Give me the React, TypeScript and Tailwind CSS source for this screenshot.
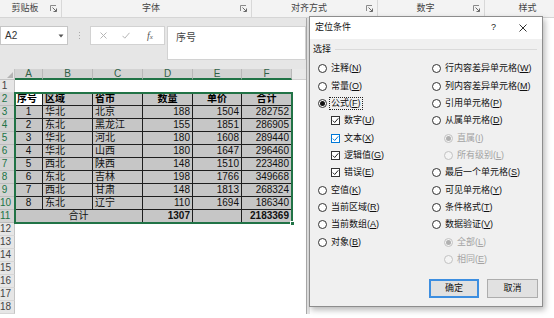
import React from "react";

const groups = [
  { label: "剪贴板", w: "w-[62px]", launcher: true },
  { label: "字体", w: "w-[190px]", launcher: true },
  { label: "对齐方式", w: "w-[126px]", launcher: true },
  { label: "数字", w: "w-[107px]", launcher: true },
  { label: "样式", w: "w-[90px]", launcher: false },
];

function Launcher() {
  return (
    <svg width="7" height="7" viewBox="0 0 7 7" className="shrink-0">
      <path d="M0.5 6V0.5H6" stroke="#8a8a8a" fill="none" strokeWidth="1" />
      <path d="M2.5 2.5L6.3 6.3M6.5 3.5V6.5H3.5" stroke="#6a6a6a" fill="none" strokeWidth="1" />
    </svg>
  );
}

function Ribbon() {
  return (
    <div className="flex h-[18px] overflow-hidden border-b border-[#d5d5d5] bg-[#f3f3f3]">
      {groups.map((g) => (
        <div
          key={g.label}
          className={`${g.w} flex shrink-0 items-center border-r border-[#d8d8d8] pr-[4px]`}
        >
          <span className="flex-1 text-center text-[9px] leading-none text-[#444]">{g.label}</span>
          {g.launcher && <Launcher />}
        </div>
      ))}
    </div>
  );
}

function FormulaBar() {
  return (
    <div className="flex h-[51px] items-start bg-[#e6e6e6] pt-[8px]">
      <div className="flex h-[19px] w-[68px] items-center justify-between border border-[#c6c6c6] bg-white pl-[4px] pr-[3px] text-[10px] text-[#333]">
        <span>A2</span>
        <svg width="6" height="4" viewBox="0 0 6 4">
          <path d="M0.5 0.5H5.5L3 3.5Z" fill="#555" />
        </svg>
      </div>
      <div className="flex h-[19px] w-[22px] flex-col items-center justify-center gap-[2px]">
        <span className="h-[1px] w-[1px] bg-[#aaa]" />
        <span className="h-[1px] w-[1px] bg-[#aaa]" />
        <span className="h-[1px] w-[1px] bg-[#aaa]" />
      </div>
      <div className="flex h-[19px] w-[75px] items-center border border-[#d2d2d2] bg-white pl-[9px]">
        <svg width="7" height="7" viewBox="0 0 7 7">
          <path d="M0.5 0.5L6.5 6.5M6.5 0.5L0.5 6.5" stroke="#b5b5b5" strokeWidth="1" />
        </svg>
        <svg width="8" height="7" viewBox="0 0 8 7" className="ml-[15px]">
          <path d="M0.5 3.8L2.8 6.2L7.5 0.8" stroke="#b5b5b5" strokeWidth="1" fill="none" />
        </svg>
        <span className="ml-[17px] font-['Liberation_Serif',serif] text-[10px] italic leading-none text-[#555]">
          f<span className="text-[7px]">x</span>
        </span>
      </div>
      <div className="ml-[2px] h-[34px] w-[139px] border border-[#d2d2d2] bg-white pl-[8px] pt-[3px] font-['Noto_Sans_CJK_SC',sans-serif] text-[10px] leading-[14px] text-[#444]">
        序号
      </div>
    </div>
  );
}

const colDefs = [
  { k: "A", w: "w-[28px]" },
  { k: "B", w: "w-[50px]" },
  { k: "C", w: "w-[50px]" },
  { k: "D", w: "w-[50px]" },
  { k: "E", w: "w-[49px]" },
  { k: "F", w: "w-[50px]" },
];

const data = [
  ["1", "华北", "北京", "188", "1504", "282752"],
  ["2", "东北", "黑龙江", "155", "1851", "286905"],
  ["3", "华北", "河北", "180", "1608", "289440"],
  ["4", "华北", "山西", "180", "1647", "296460"],
  ["5", "西北", "陕西", "148", "1510", "223480"],
  ["6", "东北", "吉林", "198", "1766", "349668"],
  ["7", "西北", "甘肃", "148", "1813", "268324"],
  ["8", "东北", "辽宁", "110", "1694", "186340"],
];

const cellBase =
  "h-[13px] shrink-0 border-r border-b border-[#1e1e1e] overflow-hidden whitespace-nowrap text-[10px] leading-[12px]";

function Sheet() {
  const rowNums = Array.from({ length: 18 }, (_, i) => i + 1);
  return (
    <div className="bg-white">
      {/* column headers */}
      <div className="flex h-[11px]">
        <div className="relative w-[15px] shrink-0 border-r border-b border-[#c4c4c4] bg-[#e6e6e6]">
          <svg width="6" height="6" viewBox="0 0 6 6" className="absolute bottom-[1px] right-[1px]">
            <path d="M6 0V6H0Z" fill="#b4b4b4" />
          </svg>
        </div>
        {colDefs.map((c) => (
          <div
            key={c.k}
            className={`${c.w} shrink-0 border-r border-b-2 border-r-[#b8b8b8] border-b-[#217346] bg-[#d3d3d3] text-center text-[10px] leading-[10px] text-[#2f5f46]`}
          >
            {c.k}
          </div>
        ))}
        <div className="flex-1 border-b border-[#d0d0d0] bg-[#e9e9e9]" />
      </div>
      <div className="flex">
        {/* row headers */}
        <div className="w-[15px] shrink-0">
          {rowNums.map((n) => {
            const sel = n >= 2 && n <= 11;
            return (
              <div
                key={n}
                className={`h-[13px] border-r border-b pr-[5px] text-center text-[10px] leading-[12px] ${
                  sel
                    ? "border-r-[#b8b8b8] border-b-[#bdbdbd] bg-[#d3d3d3] text-[#217346]"
                    : "border-r-[#c4c4c4] border-b-[#d6d6d6] bg-[#e6e6e6] text-[#444]"
                }`}
              >
                {n}
              </div>
            );
          })}
        </div>
        {/* cells */}
        <div className="w-[277px] shrink-0">
          <div className="h-[13px]" />
          <div className="relative outline-2 -outline-offset-1 outline-[#217346]">
            {/* header row 2 */}
            <div className="flex font-bold">
              <div className={`${cellBase} w-[28px] bg-white pl-[2px]`}>序号</div>
              <div className={`${cellBase} w-[50px] bg-[#c6c6c6] pl-[2px]`}>区域</div>
              <div className={`${cellBase} w-[50px] bg-[#c6c6c6] pl-[2px]`}>省市</div>
              <div className={`${cellBase} w-[50px] bg-[#c6c6c6] text-center`}>数量</div>
              <div className={`${cellBase} w-[49px] bg-[#c6c6c6] text-center`}>单价</div>
              <div className={`${cellBase} w-[50px] bg-[#c6c6c6] text-center`}>合计</div>
            </div>
            {data.map((r) => (
              <div key={r[0]} className="flex bg-[#c6c6c6] text-[#111]">
                <div className={`${cellBase} w-[28px] text-center`}>{r[0]}</div>
                <div className={`${cellBase} w-[50px] pl-[2px]`}>{r[1]}</div>
                <div className={`${cellBase} w-[50px] pl-[2px]`}>{r[2]}</div>
                <div className={`${cellBase} w-[50px] pr-[2px] text-right`}>{r[3]}</div>
                <div className={`${cellBase} w-[49px] pr-[2px] text-right`}>{r[4]}</div>
                <div className={`${cellBase} w-[50px] pr-[2px] text-right`}>{r[5]}</div>
              </div>
            ))}
            <div className="flex bg-[#c6c6c6] text-[#111]">
              <div className={`${cellBase} w-[128px] text-center`}>合计</div>
              <div className={`${cellBase} w-[50px] pr-[2px] text-right font-bold`}>1307</div>
              <div className={`${cellBase} w-[49px]`} />
              <div className={`${cellBase} w-[50px] pr-[2px] text-right font-bold`}>2183369</div>
            </div>
            <div className="absolute -bottom-[3px] -right-[3px] h-[5px] w-[5px] border border-white bg-[#217346]" />
          </div>
          <div className="h-[91px]" />
        </div>
        <div className="flex-1 bg-white" />
      </div>
    </div>
  );
}

function Radio({ checked, disabled }: { checked?: boolean; disabled?: boolean }) {
  return (
    <span
      className={`inline-flex h-[9px] w-[9px] shrink-0 items-center justify-center rounded-full border ${
        disabled ? "border-[#c2c2c2] bg-[#f4f4f4]" : "border-[#333] bg-white"
      }`}
    >
      {checked && (
        <span className={`h-[5px] w-[5px] rounded-full ${disabled ? "bg-[#b0b0b0]" : "bg-[#111]"}`} />
      )}
    </span>
  );
}

function Check({ blue }: { blue?: boolean }) {
  return (
    <span
      className={`inline-flex h-[9px] w-[9px] shrink-0 items-center justify-center border bg-white ${
        blue ? "border-[#0078d7]" : "border-[#333]"
      }`}
    >
      <svg width="7" height="7" viewBox="0 0 7 7">
        <path
          d="M0.8 3.6L2.7 5.5L6.3 1.3"
          stroke={blue ? "#0078d7" : "#222"}
          strokeWidth="1"
          fill="none"
        />
      </svg>
    </span>
  );
}

type Opt = {
  t: string;
  k: string;
  kind: "radio" | "check";
  checked?: boolean;
  disabled?: boolean;
  indent?: boolean;
  blue?: boolean;
  focus?: boolean;
};

const leftOpts: Opt[] = [
  { t: "注释", k: "N", kind: "radio" },
  { t: "常量", k: "O", kind: "radio" },
  { t: "公式", k: "F", kind: "radio", checked: true, focus: true },
  { t: "数字", k: "U", kind: "check", indent: true },
  { t: "文本", k: "X", kind: "check", indent: true, blue: true },
  { t: "逻辑值", k: "G", kind: "check", indent: true },
  { t: "错误", k: "E", kind: "check", indent: true },
  { t: "空值", k: "K", kind: "radio" },
  { t: "当前区域", k: "R", kind: "radio" },
  { t: "当前数组", k: "A", kind: "radio" },
  { t: "对象", k: "B", kind: "radio" },
];

const rightOpts: Opt[] = [
  { t: "行内容差异单元格", k: "W", kind: "radio" },
  { t: "列内容差异单元格", k: "M", kind: "radio" },
  { t: "引用单元格", k: "P", kind: "radio" },
  { t: "从属单元格", k: "D", kind: "radio" },
  { t: "直属", k: "I", kind: "radio", disabled: true, checked: true, indent: true },
  { t: "所有级别", k: "L", kind: "radio", disabled: true, indent: true },
  { t: "最后一个单元格", k: "S", kind: "radio" },
  { t: "可见单元格", k: "Y", kind: "radio" },
  { t: "条件格式", k: "T", kind: "radio" },
  { t: "数据验证", k: "V", kind: "radio" },
  { t: "全部", k: "L", kind: "radio", disabled: true, checked: true, indent: true },
  { t: "相同", k: "E", kind: "radio", disabled: true, indent: true },
];

function OptRow({ o, leftIndent }: { o: Opt; leftIndent: string }) {
  return (
    <div className={`flex h-[17.35px] items-center ${o.indent ? leftIndent : ""}`}>
      {o.kind === "radio" ? <Radio checked={o.checked} disabled={o.disabled} /> : <Check blue={o.blue} />}
      <span
        className={`ml-[3px] whitespace-nowrap px-[1px] text-[9px] leading-[11px] ${
          o.disabled ? "text-[#a3a3a3]" : "text-[#111]"
        } ${o.focus ? "outline-1 outline-dotted outline-[#222]" : ""}`}
      >
        {o.t}(<span className="underline underline-offset-1">{o.k}</span>)
      </span>
    </div>
  );
}

function Dialog() {
  return (
    <div className="absolute left-[309px] top-[16px] flex h-[291px] w-[234px] flex-col border border-[#8d8d8d] bg-[#f0f0f0] font-['Liberation_Sans','Noto_Sans_CJK_SC',sans-serif] shadow-[2px_3px_6px_rgba(0,0,0,0.28)]">
      <div className="flex h-[22px] items-center bg-white pl-[5px] text-[9px] text-[#111]">
        <span>定位条件</span>
        <span className="ml-auto mr-[23px] text-[9px] text-[#222]">?</span>
        <svg width="8" height="8" viewBox="0 0 8 8" className="mr-[15px]">
          <path d="M0.5 0.5L7.5 7.5M7.5 0.5L0.5 7.5" stroke="#333" strokeWidth="1" />
        </svg>
      </div>
      <div className="mt-[4px] flex h-[12px] items-center pl-[3px] pr-[5px]">
        <span className="text-[9px] leading-none text-[#111]">选择</span>
        <span className="ml-[4px] h-px flex-1 bg-[#dadada]" />
      </div>
      <div className="mt-[5px] flex">
        <div className="w-[122px] shrink-0 pl-[8px]">
          {leftOpts.map((o) => (
            <OptRow key={o.t} o={o} leftIndent="ml-[13px]" />
          ))}
        </div>
        <div className="flex-1">
          {rightOpts.map((o) => (
            <OptRow key={o.t + o.k} o={o} leftIndent="ml-[12px]" />
          ))}
        </div>
      </div>
      <div className="mt-[11px] flex justify-end gap-[8px] pr-[4px]">
        <button className="flex h-[19px] w-[50px] items-center justify-center border-2 border-[#3d8ee0] bg-[#e1e1e1] text-[9px] text-[#111]">
          确定
        </button>
        <button className="flex h-[19px] w-[51px] items-center justify-center border border-[#adadad] bg-[#e1e1e1] text-[9px] text-[#111]">
          取消
        </button>
      </div>
    </div>
  );
}

export default function App() {
  return (
    <div className="relative h-[318px] w-[554px] overflow-hidden bg-white font-['Liberation_Sans','Noto_Sans_CJK_SC',sans-serif]">
      <Ribbon />
      <div className="flex">
        <div className="w-[306px] shrink-0">
          <FormulaBar />
          <Sheet />
        </div>
        <div className="w-px bg-[#a9a9a9]" />
        <div className="w-[3px] bg-[#e3e3e3]" />
        <div className="flex-1 bg-white" />
      </div>
      <Dialog />
    </div>
  );
}
